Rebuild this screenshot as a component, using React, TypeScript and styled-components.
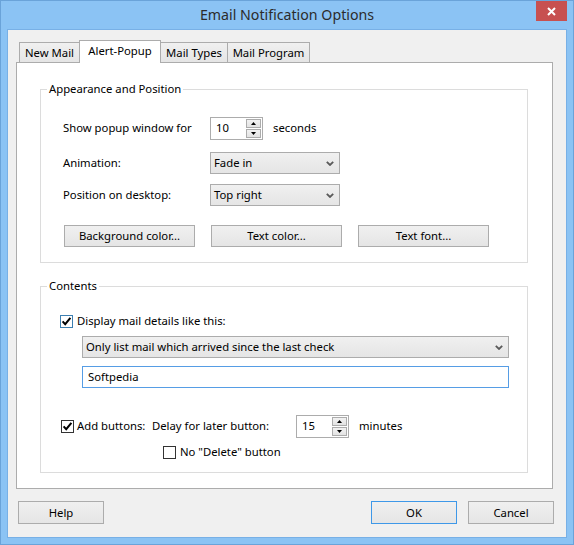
import React from "react";
import styled, { createGlobalStyle, css } from "styled-components";

const FONT = `"Noto Sans", "Open Sans", "DejaVu Sans", sans-serif`;

const GlobalStyle = createGlobalStyle`
  html, body { margin: 0; padding: 0; background: #ffffff; }
  body { font-family: ${FONT}; font-size: 11.3px; color: #000; }
  * { box-sizing: border-box; }
`;

const Window = styled.div`
  width: 574px;
  height: 545px;
  background: #8bc3f4;
  border: 1px solid #6aa3d9;
  display: flex;
  flex-direction: column;
`;

const TitleBar = styled.div`
  height: 29px;
  flex: none;
  display: grid;
  grid-template-columns: 1fr auto 1fr;
`;

const Title = styled.div`
  grid-column: 2;
  align-self: center;
  font-size: 14.2px;
  line-height: 18px;
  color: #2b2b2b;
  margin-bottom: 2px;
  white-space: nowrap;
`;

const CloseButton = styled.div`
  grid-column: 3;
  justify-self: end;
  align-self: start;
  width: 31px;
  height: 20px;
  margin-right: 6px;
  background: #c75050;
  display: flex;
  align-items: center;
  justify-content: center;
`;

const Client = styled.div`
  flex: 1;
  margin: 0 7px 7px 7px;
  background: #f0f0f0;
  box-shadow: 0 0 0 1px #78b0e6;
  padding: 10px 13px 0 8px;
  display: flex;
  flex-direction: column;
`;

const TabStrip = styled.div`
  display: flex;
  align-items: flex-end;
  height: 23px;
  margin-bottom: -1px;
  padding-left: 3px;
  position: relative;
  z-index: 1;
`;

const Tab = styled.div<{ $active?: boolean; $w: number }>`
  width: ${(p) => p.$w}px;
  display: flex;
  align-items: center;
  justify-content: center;
  border: 1px solid #acacac;
  border-bottom: none;
  white-space: nowrap;
  line-height: 15px;
  & + & { margin-left: -1px; }
  ${(p) =>
    p.$active
      ? css`
          height: 23px;
          background: #ffffff;
          position: relative;
          z-index: 2;
          padding-bottom: 3px;
        `
      : css`
          height: 20px;
          margin-bottom: 1px;
          padding-bottom: 1px;
          background: linear-gradient(#f0f0f0, #e5e5e5);
        `}
`;

const Panel = styled.div`
  flex: none;
  background: #ffffff;
  border: 1px solid #acacac;
  padding: 0 24px 15px 23px;
  display: flex;
  flex-direction: column;
`;

const Group = styled.div<{ $top: number; $padTop: number; $padBottom: number; $padLeft: number }>`
  position: relative;
  border: 1px solid #dcdcdc;
  margin-top: ${(p) => p.$top}px;
  padding: ${(p) => p.$padTop}px 0 ${(p) => p.$padBottom}px ${(p) => p.$padLeft}px;
  display: flex;
  flex-direction: column;
`;

const Legend = styled.span`
  position: absolute;
  top: -9px;
  left: 6px;
  padding: 0 2px;
  background: #ffffff;
  line-height: 15px;
  white-space: nowrap;
`;

const FormRow = styled.div<{ $top?: number }>`
  display: grid;
  grid-template-columns: 147px auto auto 1fr;
  align-items: center;
  margin-top: ${(p) => p.$top ?? 0}px;
`;

const Label = styled.span`
  line-height: 15px;
  padding-bottom: 2px;
  white-space: nowrap;
`;

const Unit = styled(Label)`
  margin-left: 10px;
`;

const SpinBox = styled.div`
  width: 53px;
  height: 23px;
  border: 1px solid #acacac;
  background: #ffffff;
  display: flex;
  align-items: stretch;
`;

const SpinValue = styled.span`
  flex: 1;
  padding: 0 0 2px 5px;
  display: flex;
  align-items: center;
  line-height: 15px;
`;

const SpinButtons = styled.div`
  display: flex;
  flex-direction: column;
  gap: 1px;
  padding: 1px 1px 1px 0;
`;

const SpinButton = styled.div`
  width: 15px;
  height: 9px;
  border: 1px solid #acacac;
  background: linear-gradient(#f2f2f2, #e3e3e3);
  display: flex;
  align-items: center;
  justify-content: center;
`;

const Select = styled.div<{ $w: number }>`
  width: ${(p) => p.$w}px;
  height: 22px;
  border: 1px solid #acacac;
  background: linear-gradient(#f0f0f0, #e5e5e5);
  display: flex;
  align-items: center;
  padding: 0 5px 0 3px;
  line-height: 15px;
  white-space: nowrap;
`;

const SelectText = styled.span`
  flex: 1;
  padding-bottom: 1px;
`;

const ButtonRow = styled.div`
  display: flex;
  gap: 16px;
  margin-top: 19px;
  margin-left: 1px;
`;

const Button = styled.div<{ $w: number; $h?: number; $primary?: boolean }>`
  width: ${(p) => p.$w}px;
  height: ${(p) => p.$h ?? 22}px;
  border: 1px solid ${(p) => (p.$primary ? "#3e98e8" : "#acacac")};
  background: linear-gradient(#f0f0f0, #e5e5e5);
  display: flex;
  align-items: center;
  justify-content: center;
  padding-bottom: 1px;
  line-height: 15px;
  white-space: nowrap;
`;

const CheckRow = styled.div<{ $top?: number; $left?: number }>`
  display: flex;
  align-items: center;
  gap: 4px;
  height: 16px;
  margin-top: ${(p) => p.$top ?? 0}px;
  margin-left: ${(p) => p.$left ?? 0}px;
`;

const Box = styled.div<{ $focus?: boolean }>`
  width: 13px;
  height: 13px;
  flex: none;
  border: 1px solid ${(p) => (p.$focus ? "#3c7fb1" : "#333333")};
  background: #ffffff;
  display: flex;
  align-items: center;
  justify-content: center;
`;

const Indented = styled.div<{ $top: number }>`
  margin-left: 22px;
  margin-top: ${(p) => p.$top}px;
`;

const TextInput = styled.div`
  width: 427px;
  height: 22px;
  border: 1px solid #569de5;
  background: #ffffff;
  padding: 0 0 2px 5px;
  display: flex;
  align-items: center;
  line-height: 15px;
`;

const AddRow = styled.div`
  display: grid;
  grid-template-columns: 16px 75px 144px 53px auto;
  align-items: center;
  margin-top: 27px;
  margin-left: 1px;
`;

const Footer = styled.div`
  display: flex;
  align-items: center;
  margin-top: 12px;
  padding-left: 2px;
  margin-right: -1px;
  gap: 11px;
`;

const Spacer = styled.div`
  flex: 1;
`;

const Check = () => (
  <svg width="11" height="11" viewBox="0 0 11 11">
    <path d="M1.6 5.4 L4.2 8.2 L9.4 1.8" fill="none" stroke="#000" strokeWidth="2" />
  </svg>
);

const Checkbox = ({ checked, focus }: { checked?: boolean; focus?: boolean }) => (
  <Box $focus={focus}>{checked && <Check />}</Box>
);

const Chevron = () => (
  <svg width="8" height="5" viewBox="0 0 8 5">
    <polyline points="0.8,0.8 4,4 7.2,0.8" fill="none" stroke="#5a5a5a" strokeWidth="1.8" />
  </svg>
);

const Triangle = ({ up }: { up?: boolean }) => (
  <svg width="5" height="3" viewBox="0 0 5 3">
    <polygon points={up ? "2.5,0 5,3 0,3" : "0,0 5,0 2.5,3"} fill="#000" />
  </svg>
);

const Spin = ({ value }: { value: string }) => (
  <SpinBox>
    <SpinValue>{value}</SpinValue>
    <SpinButtons>
      <SpinButton>
        <Triangle up />
      </SpinButton>
      <SpinButton>
        <Triangle />
      </SpinButton>
    </SpinButtons>
  </SpinBox>
);

const Dropdown = ({ text, w }: { text: string; w: number }) => (
  <Select $w={w}>
    <SelectText>{text}</SelectText>
    <Chevron />
  </Select>
);

export default function App() {
  return (
    <>
      <GlobalStyle />
      <Window>
        <TitleBar>
          <Title>Email Notification Options</Title>
          <CloseButton>
            <svg width="9" height="9" viewBox="0 0 9 9">
              <path d="M1 1 L8 8 M8 1 L1 8" stroke="#ffffff" strokeWidth="2" />
            </svg>
          </CloseButton>
        </TitleBar>
        <Client>
          <TabStrip>
            <Tab $w={61}>New Mail</Tab>
            <Tab $w={82} $active>
              Alert-Popup
            </Tab>
            <Tab $w={68}>Mail Types</Tab>
            <Tab $w={83}>Mail Program</Tab>
          </TabStrip>
          <Panel>
            <Group $top={26} $padTop={27} $padBottom={15} $padLeft={22}>
              <Legend>Appearance and Position</Legend>
              <FormRow>
                <Label>Show popup window for</Label>
                <Spin value="10" />
                <Unit>seconds</Unit>
              </FormRow>
              <FormRow $top={12}>
                <Label>Animation:</Label>
                <Dropdown text="Fade in" w={130} />
              </FormRow>
              <FormRow $top={10}>
                <Label>Position on desktop:</Label>
                <Dropdown text="Top right" w={130} />
              </FormRow>
              <ButtonRow>
                <Button $w={131}>Background color...</Button>
                <Button $w={131}>Text color...</Button>
                <Button $w={131}>Text font...</Button>
              </ButtonRow>
            </Group>
            <Group $top={23} $padTop={26} $padBottom={12} $padLeft={19}>
              <Legend>Contents</Legend>
              <CheckRow>
                <Checkbox checked focus />
                <Label>Display mail details like this:</Label>
              </CheckRow>
              <Indented $top={7}>
                <Dropdown text="Only list mail which arrived since the last check" w={427} />
              </Indented>
              <Indented $top={8}>
                <TextInput>Softpedia</TextInput>
              </Indented>
              <AddRow>
                <Checkbox checked />
                <Label>Add buttons:</Label>
                <Label>Delay for later button:</Label>
                <Spin value="15" />
                <Unit>minutes</Unit>
              </AddRow>
              <CheckRow $top={6} $left={103}>
                <Checkbox />
                <Label>No "Delete" button</Label>
              </CheckRow>
            </Group>
          </Panel>
          <Footer>
            <Button $w={86} $h={23}>
              Help
            </Button>
            <Spacer />
            <Button $w={86} $h={23} $primary>
              OK
            </Button>
            <Button $w={86} $h={23}>
              Cancel
            </Button>
          </Footer>
        </Client>
      </Window>
    </>
  );
}
